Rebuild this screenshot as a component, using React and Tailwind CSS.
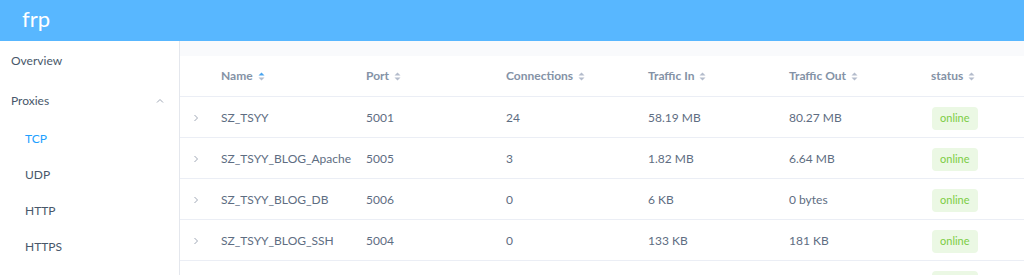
import React from "react";

const rows = [
  { name: "SZ_TSYY", port: "5001", conns: "24", trafficIn: "58.19 MB", trafficOut: "80.27 MB", status: "online" },
  { name: "SZ_TSYY_BLOG_Apache", port: "5005", conns: "3", trafficIn: "1.82 MB", trafficOut: "6.64 MB", status: "online" },
  { name: "SZ_TSYY_BLOG_DB", port: "5006", conns: "0", trafficIn: "6 KB", trafficOut: "0 bytes", status: "online" },
  { name: "SZ_TSYY_BLOG_SSH", port: "5004", conns: "0", trafficIn: "133 KB", trafficOut: "181 KB", status: "online" },
  { name: "SZ_TSYY_WEB", port: "5002", conns: "0", trafficIn: "0 bytes", trafficOut: "0 bytes", status: "online" },
];

// column widths, taken from the header positions
const widths = ["w-[145px]", "w-[140px]", "w-[142px]", "w-[141px]", "w-[142px]", "flex-1"];
const columns = ["Name", "Port", "Connections", "Traffic In", "Traffic Out", "status"];

const SortIcon = ({ active }) => (
  <svg width="7" height="9" viewBox="0 0 7 9" className="ml-[5px] inline-block">
    <path d="M0.5 3.5 L3.5 0.5 L6.5 3.5 Z" fill={active ? "#4aa5f0" : "#b4bccc"} />
    <path d="M0.5 5.5 L3.5 8.5 L6.5 5.5 Z" fill="#b4bccc" />
  </svg>
);

const Chevron = ({ dir }) => (
  <svg width="8" height="8" viewBox="0 0 8 8" fill="none" stroke="#a0a8b6" strokeWidth="1">
    {dir === "up" ? <path d="M1 5.5 L4 2.5 L7 5.5" /> : <path d="M2.5 1 L5.5 4 L2.5 7" />}
  </svg>
);

const App = () => {
  return (
    <div className="w-[1024px] h-[275px] overflow-hidden bg-white font-['Lato',sans-serif]">
      <header className="h-[41px] bg-[#58b7ff] flex items-center pl-[22px]">
        <span className="text-white text-[22px] leading-none pb-[4px]">frp</span>
      </header>
      <div className="flex">
        <aside className="w-[180px] shrink-0 border-r border-[#e4e7ed] h-[234px] text-[12px] text-[#48576a]">
          <div className="h-[40px] flex items-center pl-[11px]">Overview</div>
          <div className="h-[40px] flex items-center justify-between pl-[11px] pr-[15px]">
            <span>Proxies</span>
            <Chevron dir="up" />
          </div>
          <div className="h-[36px] flex items-center pl-[25px] text-[#20a0ff]">TCP</div>
          <div className="h-[36px] flex items-center pl-[25px]">UDP</div>
          <div className="h-[36px] flex items-center pl-[25px]">HTTP</div>
          <div className="h-[36px] flex items-center pl-[25px]">HTTPS</div>
        </aside>
        <main className="flex-1">
          <div className="h-[15px] bg-[#f9fafc]" />
          <div className="flex h-[41px] items-center border-b border-[#ebeef5] text-[12px] font-bold text-[#8492a6]">
            <div className="w-[29px]" />
            {columns.map((c, i) => (
              <div key={c} className={`${widths[i]} pl-[12px] flex items-center`}>
                {c}
                <SortIcon active={i === 0} />
              </div>
            ))}
          </div>
          {rows.map((r) => (
            <div key={r.name} className="flex h-[41px] pt-[2px] items-center border-b border-[#ebeef5] text-[12px] text-[#5e6d82]">
              <div className="w-[29px] flex justify-center pl-[3px]">
                <Chevron dir="right" />
              </div>
              <div className={`${widths[0]} pl-[12px]`}>{r.name}</div>
              <div className={`${widths[1]} pl-[12px]`}>{r.port}</div>
              <div className={`${widths[2]} pl-[12px]`}>{r.conns}</div>
              <div className={`${widths[3]} pl-[12px]`}>{r.trafficIn}</div>
              <div className={`${widths[4]} pl-[12px]`}>{r.trafficOut}</div>
              <div className="flex-1 pl-[13px]">
                <span className="inline-flex items-center h-[23px] px-[8px] rounded-[4px] bg-[#ebf8e4] text-[#7ccd44] text-[11px]">
                  {r.status}
                </span>
              </div>
            </div>
          ))}
        </main>
      </div>
    </div>
  );
};

export default App;
